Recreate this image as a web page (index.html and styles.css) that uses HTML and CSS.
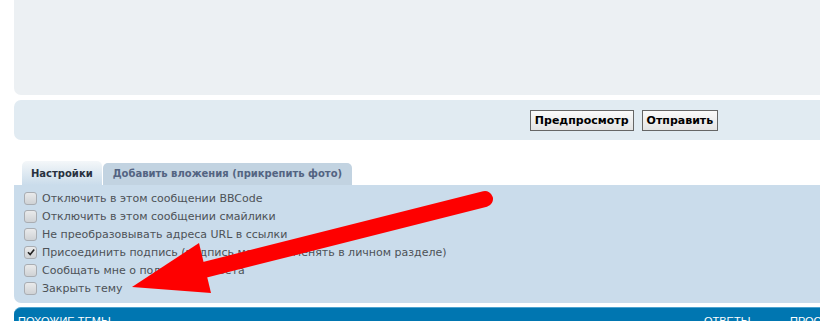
FILE: index.html
```html
<!DOCTYPE html>
<html lang="ru">
<head>
<meta charset="UTF-8">
<meta name="viewport" content="width=device-width, initial-scale=1.0">
<title>Ответить</title>
<link rel="stylesheet" href="styles.css">
</head>
<body>
<div class="page">
  <div class="panel editor"></div>

  <div class="panel submit-bar">
    <button class="btn">Предпросмотр</button>
    <button class="btn">Отправить</button>
  </div>

  <ul class="tabs">
    <li class="tab active">Настройки</li>
    <li class="tab">Добавить вложения (прикрепить фото)</li>
  </ul>

  <div class="panel options">
    <label class="opt"><span class="cb"></span>Отключить в этом сообщении BBCode</label>
    <label class="opt"><span class="cb"></span>Отключить в этом сообщении смайлики</label>
    <label class="opt"><span class="cb"></span>Не преобразовывать адреса URL в ссылки</label>
    <label class="opt"><span class="cb checked"><svg viewBox="0 0 10 10" width="10" height="10"><path d="M2 5.2 L4.2 7.6 L8.2 2.4" fill="none" stroke="#222" stroke-width="1.6"/></svg></span>Присоединить подпись (подпись можно изменять в личном разделе)</label>
    <label class="opt"><span class="cb"></span>Сообщать мне о получении ответа</label>
    <label class="opt"><span class="cb"></span>Закрыть тему</label>
  </div>

  <div class="forumbg">
    <span class="col-title">Похожие темы</span>
    <span class="col-replies">Ответы</span>
    <span class="col-views">Просмотры</span>
  </div>
</div>

<!-- red arrow drawn over the options -->
<svg class="arrow" width="820" height="321" viewBox="0 0 820 321">
  <line x1="485" y1="199" x2="200" y2="271" stroke="#fe0000" stroke-width="16" stroke-linecap="round"/>
  <polygon points="132,287 199,243 211,293" fill="#fe0000"/>
</svg>
</body>
</html>
```

FILE: styles.css
```css
body {
  margin: 0;
  background: #fff;
  font-family: "DejaVu Sans", Verdana, sans-serif;
  overflow: hidden;
}
.page {
  margin-left: 14px;
  width: 1220px;
}
.panel {
  border-radius: 7px;
}
.editor {
  height: 95px;
  background: #ecf0f3;
  border-top-left-radius: 0;
  border-top-right-radius: 0;
}
.submit-bar {
  margin-top: 5px;
  height: 40px;
  background: #e1ebf2;
  display: flex;
  align-items: center;
  justify-content: center;
  gap: 8px;
}
.btn {
  height: 21px;
  padding: 0 4px;
  font-family: "DejaVu Sans", Verdana, sans-serif;
  font-size: 11px;
  font-weight: bold;
  color: #000;
  border: 1px solid #666;
  background: linear-gradient(#fafafa, #e4e4e4);
  border-radius: 0;
  cursor: pointer;
}
.tabs {
  list-style: none;
  margin: 21px 0 0 8px;
  padding: 0;
  display: flex;
  align-items: flex-end;
  gap: 1px;
}
.tab {
  height: 22px;
  line-height: 22px;
  padding: 0 10px;
  font-size: 10px;
  font-weight: bold;
  color: #536482;
  background: #c2d3e1;
  border-radius: 5px 5px 0 0;
}
.tab.active {
  height: 24px;
  line-height: 25px;
  padding: 0 9px;
  color: #28313f;
  background: linear-gradient(#f4f7f9, #cadceb);
}
.options {
  background: #cadceb;
  padding: 4px 0 6px 10px;
  border-top-left-radius: 0;
}
.opt {
  display: flex;
  align-items: center;
  height: 18px;
  font-size: 11px;
  color: #4d5257;
}
.cb {
  width: 11px;
  height: 11px;
  margin-right: 5px;
  border: 1px solid #a9adb2;
  border-radius: 3px;
  background: linear-gradient(#e9eaeb, #cfd2d5);
  display: flex;
  align-items: center;
  justify-content: center;
}
.forumbg {
  margin-top: 4px;
  height: 30px;
  background: #0076b1;
  border-top: 1px solid #4fa3cf;
  border-radius: 7px 7px 0 0;
  display: flex;
  padding-top: 7px;
  box-sizing: border-box;
  font-family: "Liberation Sans", Arial, sans-serif;
  font-size: 11px;
  color: #fff;
  text-transform: uppercase;
}
.col-title {
  width: 686px;
  padding-left: 4px;
}
.col-replies {
  width: 86px;
}
.arrow {
  position: absolute;
  left: 0;
  top: 0;
  pointer-events: none;
}
```
